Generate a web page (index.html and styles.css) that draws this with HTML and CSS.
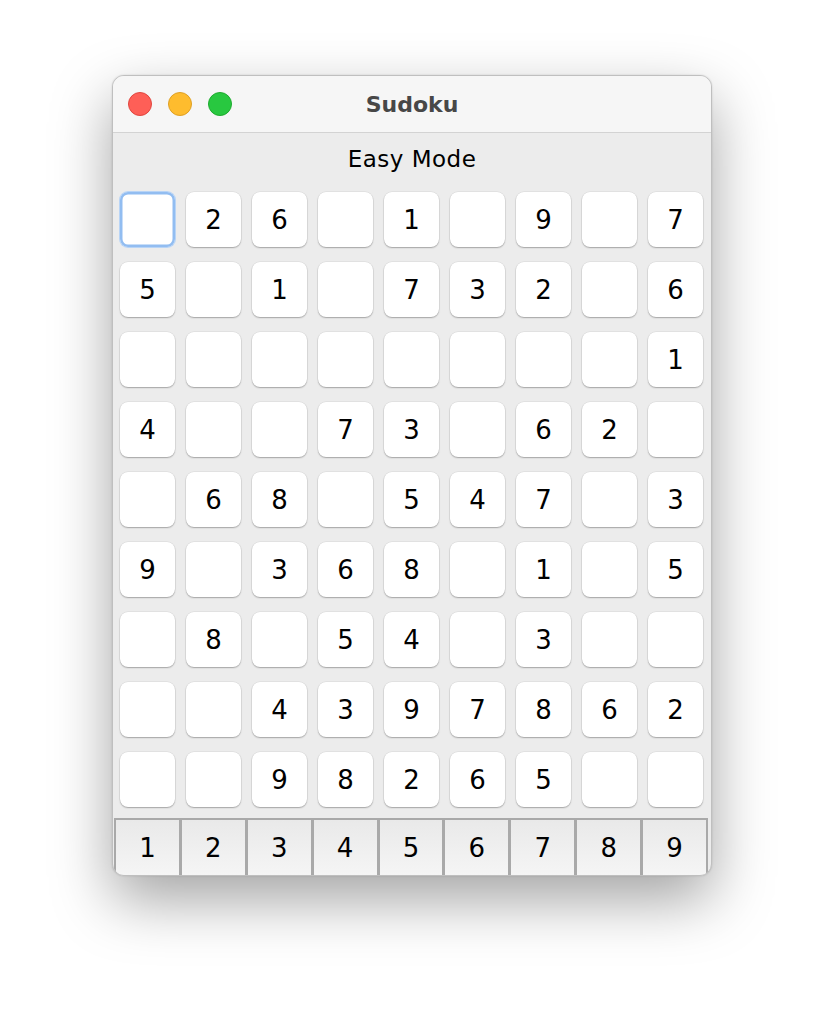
FILE: index.html
```html
<!DOCTYPE html>
<html>
<head>
<meta charset="utf-8">
<title>Sudoku</title>
<link rel="stylesheet" href="styles.css">
</head>
<body>
<div class="stage">
  <div class="window">
    <div class="titlebar">
      <div class="lights">
        <span class="light red"></span>
        <span class="light yellow"></span>
        <span class="light green"></span>
      </div>
      <div class="title">Sudoku</div>
      <div></div>
    </div>
    <div class="content">
      <div class="mode">Easy Mode</div>
      <div class="board">
        <div class="cell focus"></div><div class="cell">2</div><div class="cell">6</div><div class="cell"></div><div class="cell">1</div><div class="cell"></div><div class="cell">9</div><div class="cell"></div><div class="cell">7</div>
        <div class="cell">5</div><div class="cell"></div><div class="cell">1</div><div class="cell"></div><div class="cell">7</div><div class="cell">3</div><div class="cell">2</div><div class="cell"></div><div class="cell">6</div>
        <div class="cell"></div><div class="cell"></div><div class="cell"></div><div class="cell"></div><div class="cell"></div><div class="cell"></div><div class="cell"></div><div class="cell"></div><div class="cell">1</div>
        <div class="cell">4</div><div class="cell"></div><div class="cell"></div><div class="cell">7</div><div class="cell">3</div><div class="cell"></div><div class="cell">6</div><div class="cell">2</div><div class="cell"></div>
        <div class="cell"></div><div class="cell">6</div><div class="cell">8</div><div class="cell"></div><div class="cell">5</div><div class="cell">4</div><div class="cell">7</div><div class="cell"></div><div class="cell">3</div>
        <div class="cell">9</div><div class="cell"></div><div class="cell">3</div><div class="cell">6</div><div class="cell">8</div><div class="cell"></div><div class="cell">1</div><div class="cell"></div><div class="cell">5</div>
        <div class="cell"></div><div class="cell">8</div><div class="cell"></div><div class="cell">5</div><div class="cell">4</div><div class="cell"></div><div class="cell">3</div><div class="cell"></div><div class="cell"></div>
        <div class="cell"></div><div class="cell"></div><div class="cell">4</div><div class="cell">3</div><div class="cell">9</div><div class="cell">7</div><div class="cell">8</div><div class="cell">6</div><div class="cell">2</div>
        <div class="cell"></div><div class="cell"></div><div class="cell">9</div><div class="cell">8</div><div class="cell">2</div><div class="cell">6</div><div class="cell">5</div><div class="cell"></div><div class="cell"></div>
      </div>
      <div class="pad">
        <div class="key">1</div><div class="key">2</div><div class="key">3</div><div class="key">4</div><div class="key">5</div><div class="key">6</div><div class="key">7</div><div class="key">8</div><div class="key">9</div>
      </div>
    </div>
  </div>
</div>
</body>
</html>
```

FILE: styles.css
```css
html, body {
  margin: 0;
  padding: 0;
  background: #ffffff;
}

body {
  font-family: "DejaVu Sans", "Liberation Sans", sans-serif;
  color: #000;
}

.stage {
  display: flex;
  justify-content: center;
  padding-top: 75px;
  height: 1024px;
  box-sizing: border-box;
}

.window {
  width: 600px;
  height: 801px;
  box-sizing: border-box;
  border: 1px solid #bfbfbf;
  border-radius: 12px;
  overflow: hidden;
  background: #ececec;
  box-shadow: 0 24px 60px rgba(0, 0, 0, 0.36), 0 0 2px rgba(0, 0, 0, 0.15);
  display: flex;
  flex-direction: column;
}

.titlebar {
  height: 56px;
  flex: none;
  background: #f6f6f6;
  border-bottom: 1px solid #d3d3d3;
  display: grid;
  grid-template-columns: 1fr auto 1fr;
  align-items: center;
}

.lights {
  display: flex;
  gap: 16px;
  padding-left: 15px;
}

.light {
  width: 24px;
  height: 24px;
  border-radius: 50%;
  box-sizing: border-box;
}

.red { background: #fe5f57; border: 1px solid #e1463f; }
.yellow { background: #febc2e; border: 1px solid #dfa024; }
.green { background: #28c840; border: 1px solid #1eab2e; }

.title {
  font-weight: bold;
  font-size: 22px;
  color: #474747;
  padding-top: 1px;
}

.content {
  flex: 1;
  display: flex;
  flex-direction: column;
}

.mode {
  height: 52px;
  line-height: 52px;
  text-align: center;
  font-size: 23px;
  letter-spacing: 0.5px;
}

.board {
  margin-top: 7px;
  padding-left: 7px;
  display: grid;
  grid-template-columns: repeat(9, 55px);
  grid-auto-rows: 55px;
  column-gap: 11px;
  row-gap: 15px;
}

.cell {
  background: #ffffff;
  border-radius: 8px;
  box-shadow: 0 1px 1.5px rgba(0, 0, 0, 0.28), 0 0 0 0.5px rgba(0, 0, 0, 0.08);
  display: flex;
  align-items: center;
  justify-content: center;
  font-size: 26px;
}

.cell.focus {
  box-shadow: 0 0 0 1px #b8d4f6, inset 0 0 0 2.5px #92bdf1;
}

.pad {
  margin-top: 11px;
  margin-left: 1px;
  width: 594px;
  height: 57px;
  box-sizing: border-box;
  background: #a9a9a9;
  padding: 2px 2px 0 2px;
  display: grid;
  grid-template-columns: repeat(9, 1fr);
  column-gap: 3px;
}

.key {
  background: linear-gradient(#e9e9e9, #f5f5f5);
  display: flex;
  align-items: center;
  justify-content: center;
  font-size: 26px;
}
```
